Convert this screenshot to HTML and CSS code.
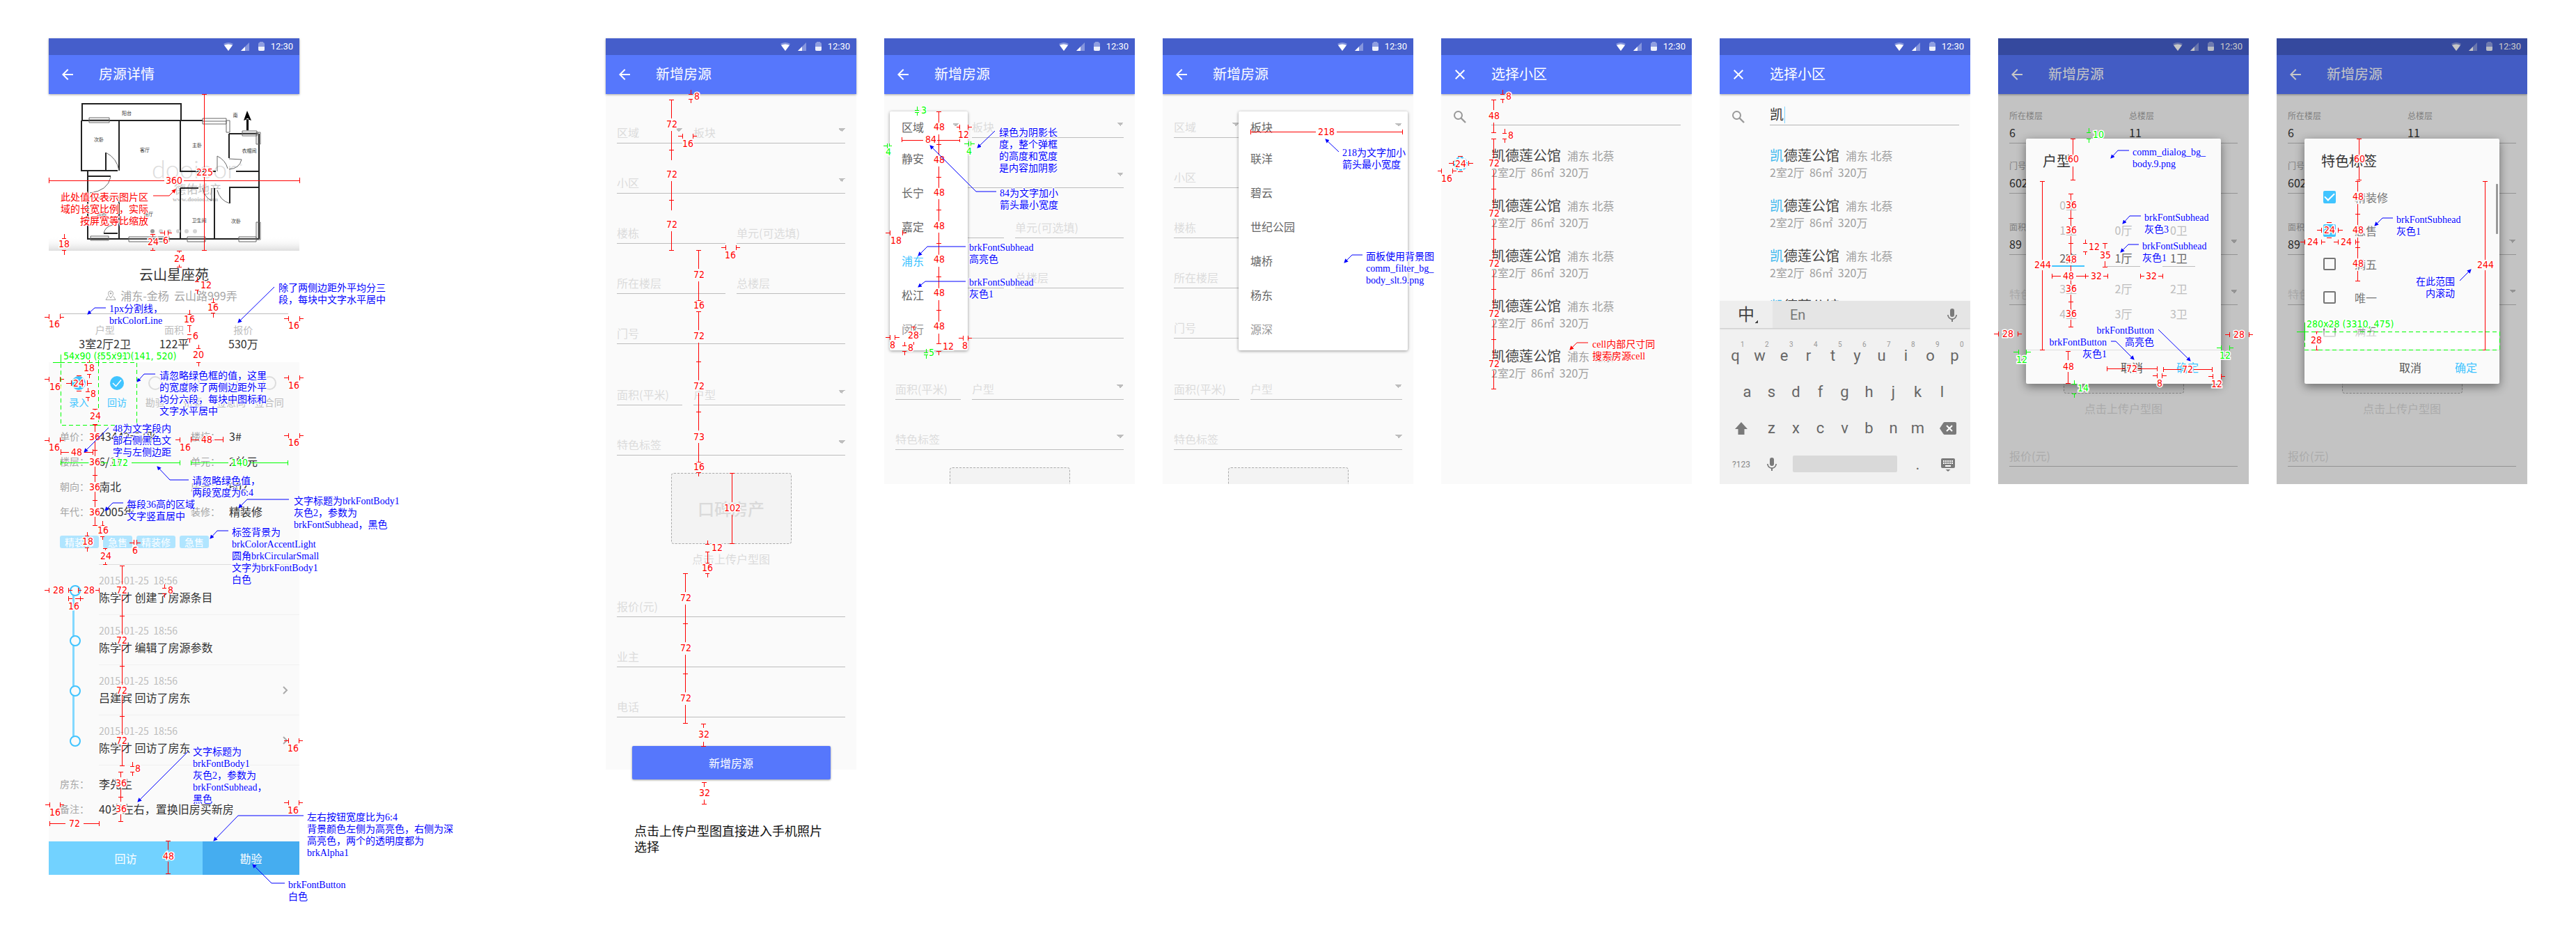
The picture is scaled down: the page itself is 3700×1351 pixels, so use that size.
FILE: index.html
```html
<!DOCTYPE html>
<html lang="zh-CN">
<head>
<meta charset="utf-8">
<meta name="viewport" content="width=device-width, initial-scale=1">
<title>房源录入 标注稿</title>
<link rel="stylesheet" href="styles.css">
</head>
<body>
<svg class="sprite" width="0" height="0" aria-hidden="true">
  <defs>
    <symbol id="i-status" viewBox="0 0 64 24">
      <path d="M0 8q7-4 14 0L7 18z" fill="#fff" opacity=".35"/><path d="M1 10q6-3 12 0L7 18z" fill="#fff"/>
      <path d="M37 6v12H25z" fill="#fff" opacity=".35"/><path d="M31 12v6h-6z" fill="#fff"/>
      <rect x="50" y="6" width="9" height="12" rx="2" fill="#fff" opacity=".4"/><path d="M50 12h9v4a2 2 0 0 1-2 2h-5a2 2 0 0 1-2-2z" fill="#fff" opacity=".85"/><rect x="52" y="5" width="5" height="1" fill="#fff" opacity=".4"/>
    </symbol>
    <symbol id="i-back" viewBox="0 0 24 24"><path d="M20 11H7.800l5.600-5.600L12 4l-8 8 8 8 1.400-1.400L7.800 13H20z" fill="currentColor"/></symbol>
    <symbol id="i-close" viewBox="0 0 24 24"><path d="M19 6.400 17.600 5 12 10.600 6.400 5 5 6.400l5.600 5.600L5 17.600 6.400 19l5.600-5.600 5.600 5.600 1.400-1.400-5.600-5.600z" fill="currentColor"/></symbol>
    <symbol id="i-search" viewBox="0 0 24 24"><circle cx="9.500" cy="9.500" r="5.500" fill="none" stroke="currentColor" stroke-width="2"/><path d="m13.500 13.500 6.500 6.500" stroke="currentColor" stroke-width="2.400"/></symbol>
    <symbol id="i-pin" viewBox="0 0 16 16"><path d="M8 12C6 9 4.500 7.500 4.500 5.300a3.500 3.500 0 0 1 7 0C11.500 7.500 10 9 8 12z" fill="none" stroke="currentColor"/><circle cx="8" cy="5.300" r="1.200" fill="currentColor"/><path d="M4 9.500 1 14.500h14l-3-5" fill="none" stroke="currentColor"/></symbol>
    <symbol id="i-done" viewBox="0 0 24 24"><circle cx="12" cy="12" r="10" fill="#40c4ff"/><path d="m6 12 4.500 4.500 7.500-9" fill="none" stroke="#fff" stroke-width="1.500"/></symbol>
    <symbol id="i-todo" viewBox="0 0 24 24"><circle cx="12" cy="12" r="9" fill="none" stroke="#dcdcdc" stroke-width="2"/></symbol>
    <symbol id="i-next" viewBox="0 0 8 12"><path d="m1 1 5 5-5 5" fill="none" stroke="#aaa" stroke-width="2"/></symbol>
    <symbol id="i-mic" viewBox="0 0 24 24"><path d="M12 14a3 3 0 0 0 3-3V5a3 3 0 0 0-6 0v6a3 3 0 0 0 3 3zm5.300-3a5.300 5.300 0 0 1-10.600 0H5a7 7 0 0 0 6 6.900V21h2v-3.100A7 7 0 0 0 19 11z" fill="#7a7a7a"/></symbol>
    <symbol id="i-shift" viewBox="0 0 18 18"><path d="M9 0 0 10h4.500v8h9v-8H18z" fill="#7a7a7a"/></symbol>
    <symbol id="i-erase" viewBox="0 0 24 18"><path d="M22 0H7Q6 0 5.300 1L0 9l5.300 8Q6 18 7 18h15q2 0 2-2V2q0-2-2-2z" fill="#7a7a7a"/><path d="m10 5 8 8m0-8-8 8" stroke="#fff" stroke-width="2"/></symbol>
    <symbol id="i-keys" viewBox="0 0 20 19"><rect width="20" height="14" rx="2" fill="#7a7a7a"/><path d="M3 4h14M3 7h14" stroke="#fff" stroke-width="2" stroke-dasharray="2 1"/><path d="M6 11h8" stroke="#fff" stroke-width="2"/><path d="M6.500 16h7L10 19z" fill="#7a7a7a"/></symbol>
    <marker id="tip-blue" viewBox="0 0 6 6" refX="5" refY="3" markerWidth="6" markerHeight="6" orient="auto" markerUnits="userSpaceOnUse"><path d="M0 0 6 3 0 6z" fill="#00f"/></marker>
    <marker id="tip-red" viewBox="0 0 6 6" refX="5" refY="3" markerWidth="6" markerHeight="6" orient="auto" markerUnits="userSpaceOnUse"><path d="M0 0 6 3 0 6z" fill="#f00"/></marker>
  </defs>
</svg>

<main class="board">

<!-- 房源详情 -->
<article class="phone phone--detail">
  <div class="screen">
    <header class="bar">
      <div class="status"><svg class="status__icons"><use href="#i-status"/></svg><span>12:30</span></div>
      <div class="toolbar"><button class="icon-button" aria-label="返回"><svg><use href="#i-back"/></svg></button><h1>房源详情</h1></div>
    </header>
    <svg class="plan" viewBox="0 80 360 225" role="img" aria-label="户型图">
      <defs><linearGradient id="fade" x2="0" y2="1"><stop offset="0" stop-color="#fff" stop-opacity="0"/><stop offset="1" stop-color="#dedede"/></linearGradient></defs>
      <rect y="80" width="360" height="225" fill="#fff"/>
      <rect y="284" width="360" height="21" fill="url(#fade)"/>
      <g class="plan__mark"><text x="148" y="201" class="plan__logo">dooioor</text><text x="274" y="186" class="plan__reg">®</text><text x="180" y="223" class="plan__brand">德佑地产</text><text x="178" y="234" class="plan__site">www.dooioo.com</text></g>
      <g class="plan__wall">
        <path d="M48 118V94h142v24M48 118h173M47 118v72h52M101 118v72M189 118v73h51M259 137v35M259 137h41M302 137v151M269 191h33M56 190v97M189 215v73M189 215h26M238 215v73M259 214h43M260 214v23M101 232v55M55 288h247M56 198h33M82 164v26M79 280h20"/>
      </g>
      <g class="plan__line">
        <path d="M82 164q16 8 19 26M242 191v-22q12 6 15 18M259 173l18 1q-3 13-18 14M89 199q-4 20-30 23M260 237q-14-4-18-19M234 215v18q-10-4-13-18M79 280q2-10 13-12M56 229h45"/>
        <path d="M58 114h29v7H58zM58 117h29M221 115h34v8h-34zM221 119h34M255 118h5v17h-5zM278 133h21v7h-21zM278 136h21M298 135h6v17h-6zM301 135v17M60 284h26v6H60zM60 287h26M115 285h58v7h-58zM115 288h58M199 285h26v7h-26zM199 288h26M273 285h25v7h-25zM273 288h25M298 264h6v25h-6zM301 264v25"/>
      </g>
      <path d="m285 104-5 14 5-2 6 2zM284 115h3v17h-3z"/>
      <g class="plan__room"><text x="112" y="110">阳台</text><text x="72" y="148">次卧</text><text x="138" y="163">客厅</text><text x="213" y="156">主卧</text><text x="288" y="164">衣帽间</text><text x="268" y="113">南</text><text x="76" y="257">厨房</text><text x="143" y="255">餐厅</text><text x="216" y="264">卫生间</text><text x="269" y="265">次卧</text></g>
      <g fill="#d5d5d5"><circle cx="149" cy="277" r="3" fill="#999"/><circle cx="161" cy="277" r="3"/><circle cx="173" cy="277" r="3"/><circle cx="186" cy="277" r="3"/><circle cx="198" cy="277" r="3"/><circle cx="210" cy="277" r="3"/></g>
    </svg>
    <section class="summary">
      <h2>云山星座苑</h2>
      <p class="address"><svg><use href="#i-pin"/></svg>浦东-金杨&nbsp; 云山路999弄</p>
      <dl class="facts">
        <div><dt>户型</dt><dd>3室2厅2卫</dd></div>
        <div><dt>面积</dt><dd>122平</dd></div>
        <div><dt>报价</dt><dd>530万</dd></div>
      </dl>
    </section>
    <ol class="steps">
      <li class="is-done"><svg><use href="#i-done"/></svg>录入</li>
      <li class="is-done"><svg><use href="#i-done"/></svg>回访</li>
      <li><svg><use href="#i-todo"/></svg>勘验</li>
      <li><svg><use href="#i-todo"/></svg>带看</li>
      <li><svg><use href="#i-todo"/></svg>签意向</li>
      <li><svg><use href="#i-todo"/></svg>签合同</li>
    </ol>
    <dl class="specs">
      <dt>单价：</dt><dd>43442元/平</dd><dt>楼栋：</dt><dd>3#</dd>
      <dt>楼层：</dt><dd>6/11</dd><dt>单元：</dt><dd>2单元</dd>
      <dt>朝向：</dt><dd>南北</dd><dt>房号：</dt><dd>602</dd>
      <dt>年代：</dt><dd>2005年</dd><dt>装修：</dt><dd>精装修</dd>
    </dl>
    <ul class="tags"><li>精装修</li><li>急售</li><li>精装修</li><li>急售</li></ul>
    <ol class="timeline">
      <li><div class="entry"><p><time>2015-01-25&nbsp; 18:56</time>陈学才 创建了房源条目</p></div></li>
      <li><div class="entry"><p><time>2015-01-25&nbsp; 18:56</time>陈学才 编辑了房源参数</p></div></li>
      <li><div class="entry"><p><time>2015-01-25&nbsp; 18:56</time>吕建宾 回访了房东</p><svg><use href="#i-next"/></svg></div></li>
      <li><div class="entry"><p><time>2015-01-25&nbsp; 18:56</time>陈学才 回访了房东</p><svg><use href="#i-next"/></svg></div></li>
    </ol>
    <dl class="specs specs--single">
      <dt>房东：</dt><dd>李先生</dd>
      <dt>备注：</dt><dd>40岁左右，置换旧房买新房</dd>
    </dl>
    <div class="actions"><button class="actions__visit">回访</button><button class="actions__survey">勘验</button></div>
  </div>
  <svg class="redlines">
    <path class="dim" d="M220 80h7M223 80V187M223 199V304M220 304h7M0 200v8M0 204H166M194 204H360M360 200v8
      M19 287h6M22 281v6M19 304h6M22 304v7M146 281h7M149 281v4M146 304h7M149 301v3M166 276v7M160 279h6M171 276v7M171 279h6
      M184 305h7M187 305v3M184 328h7M187 325v3M210 349h6M213 343v6M210 361h6M213 361v6M233 379h6M236 373v6M233 394h6M236 394v7
      M0 396v7M-6 400h6M16 396v7M16 400h6M199 396h6M202 390v6M199 412h6M202 412v10M199 425h6M199 431h6M202 431v6
      M344 399v7M338 402h6M360 399v7M360 402h6M212 445h6M215 440v5M212 465h6M215 465v6M55 465h6M58 461v4M55 482h6M58 482v6
      M0 486v7M-6 489h6M16 486v7M16 489h6M25 495h7M32 491v8M55 491v8M55 495h7M40 484h7M40 506h7M53 507h6M56 502v5M53 515h6M56 515v6
      M63 532h7M66 532v2M63 554h7M344 484v7M338 487h6M360 484v7M360 487h6
      M63 555h7M66 555V565M66 579V600M63 591h7M66 615V637M63 627h7M66 651V673M63 663h7M66 687V699M63 699h7
      M0 573v7M-6 577h6M16 573v7M16 577h6M17 590v8M17 594H29M51 594H63M63 590v8M188 573v7M182 576h6M204 572v8M204 576h12M238 576h12M250 572v8
      M344 567v7M338 570h6M360 567v7M360 570h6M74 699h6M77 693v6M74 715h6M77 715v5M52 714h6M55 709v5M52 731h6M55 731v6
      M122 720v7M116 724h6M126 720v7M126 724h6M78 732h6M81 732v3M78 755h6M81 752v3
      M102 757h7M105 757V784M105 799V856M102 829h7M105 871V928M102 901h7M105 943V1000M102 973h7M105 1015V1044M102 1044h7
      M0 789v7M-6 792h6M28 789v7M28 792h6M42 789v7M42 792h5M67 792h6M72 789v7M28 801v7M28 804h6M45 801v7M38 804h12M163 789h6M166 784v5M163 797h6M166 797v6
      M117 1045h6M120 1039v6M117 1053h6M120 1053v6M100 1053h7M103 1053v8M103 1077v19M100 1089h7M103 1114v10M100 1124h7
      M1 1097v7M-5 1100h6M16 1097v7M16 1100h6M1 1124v7M1 1127h23M50 1127h22M72 1124v7M344 1005v7M338 1008h6M359 1005v7M359 1008h6M344 1094v7M338 1097h6M359 1094v7M359 1097h6
      M168 1152h7M171 1152v13M171 1182v17M168 1199h7"/>
    <path class="dim dim--green" d="M17 454v11M6 465h11M71 454v11M17 606v7M17 609h68M119 609h69M188 606v7M204 606v7M204 609h54M290 609h53M343 606v7"/>
    <path class="dim dim--green dim--dashed" d="M17 465h109v90H17zM71 465v90"/>
    <g class="num">
      <text x="224" y="197">225</text><text x="180" y="209">360</text><text x="22" y="300">18</text><text x="150" y="297">24</text><text x="168" y="295">6</text><text x="188" y="321">24</text><text x="226" y="359">12</text><text x="236" y="391">16</text><text x="8" y="415">16</text><text x="202" y="408">16</text><text x="211" y="432">6</text><text x="215" y="459">20</text><text x="352" y="417">16</text><text x="58" y="478">18</text><text x="9" y="505">16</text><text x="43" y="500">24</text><text x="64" y="515">8</text><text x="67" y="547">24</text><text x="352" y="503">16</text>
      <text x="66" y="577">36</text><text x="66" y="613">36</text><text x="66" y="649">36</text><text x="66" y="685">36</text><text x="8" y="592">16</text><text x="40" y="599">48</text><text x="196" y="592">16</text><text x="227" y="581">48</text><text x="352" y="585">16</text><text x="78" y="711">16</text><text x="56" y="727">18</text><text x="124" y="740">6</text><text x="82" y="748">24</text>
      <text x="105" y="797">72</text><text x="105" y="869">72</text><text x="105" y="941">72</text><text x="105" y="1013">72</text><text x="14" y="797">28</text><text x="58" y="797">28</text><text x="36" y="820">16</text><text x="175" y="797">8</text><text x="128" y="1053">8</text><text x="104" y="1074">36</text><text x="104" y="1111">36</text><text x="9" y="1116">16</text><text x="37" y="1132">72</text><text x="351" y="1024">16</text><text x="351" y="1113">16</text><text x="172" y="1179">48</text>
    </g>
    <g class="num num--green"><text x="102" y="614">172</text><text x="274" y="614">140</text><text class="start" x="21" y="461">54x90 (87, 520)</text><text class="start" x="74" y="461">55x91 (141, 520)</text></g>
    <path class="lead lead--red" d="M150 226h23l9-9"/>
    <text class="note note--red end" y="233"><tspan x="143">此处值仅表示图片区</tspan><tspan x="143" dy="17">域的长宽比例，实际</tspan><tspan x="143" dy="17">按屏宽等比缩放</tspan></text>
    <path class="lead" d="M324 357 272 408"/><path class="lead" d="M82 387H66L56 396"/><path class="lead" d="M153 482H137L127 493"/><path class="lead" d="M86 559 51 594"/><path class="lead" d="M201 634H174L156 615"/><path class="lead" d="M107 667H92L81 678"/><path class="lead" d="M345 662H285L273 674"/><path class="lead" d="M258 707H242L232 718"/><path class="lead" d="M201 1023 128 1096"/><path class="lead" d="M366 1116H272L237 1152"/><path class="lead" d="M339 1213H320L293 1186"/>
    <g class="note">
      <text y="363"><tspan x="330">除了两侧边距外平均分三</tspan><tspan x="330" dy="17">段，每块中文字水平居中</tspan></text>
      <text y="393"><tspan x="87">1px分割线，</tspan><tspan x="87" dy="17">brkColorLine</tspan></text>
      <text y="489"><tspan x="159">请忽略绿色框的值，这里</tspan><tspan x="159" dy="17">的宽度除了两侧边距外平</tspan><tspan x="159" dy="17">均分六段，每块中图标和</tspan><tspan x="159" dy="17">文字水平居中</tspan></text>
      <text y="565"><tspan x="92">48为文字段内</tspan><tspan x="92" dy="17">部右侧黑色文</tspan><tspan x="92" dy="17">字与左侧边距</tspan></text>
      <text y="640"><tspan x="206">请忽略绿色值，</tspan><tspan x="206" dy="17">两段宽度为6:4</tspan></text>
      <text y="674"><tspan x="112">每段36高的区域</tspan><tspan x="112" dy="17">文字竖直居中</tspan></text>
      <text y="669"><tspan x="352">文字标题为brkFontBody1</tspan><tspan x="352" dy="17">灰色2，参数为</tspan><tspan x="352" dy="17">brkFontSubhead，黑色</tspan></text>
      <text y="714"><tspan x="263">标签背景为</tspan><tspan x="263" dy="17">brkColorAccentLight</tspan><tspan x="263" dy="17">圆角brkCircularSmall</tspan><tspan x="263" dy="17">文字为brkFontBody1</tspan><tspan x="263" dy="17">白色</tspan></text>
      <text y="1029"><tspan x="207">文字标题为</tspan><tspan x="207" dy="17">brkFontBody1</tspan><tspan x="207" dy="17">灰色2，参数为</tspan><tspan x="207" dy="17">brkFontSubhead，</tspan><tspan x="207" dy="17">黑色</tspan></text>
      <text y="1123"><tspan x="371">左右按钮宽度比为6:4</tspan><tspan x="371" dy="17">背景颜色左侧为高亮色，右侧为深</tspan><tspan x="371" dy="17">高亮色，两个的透明度都为</tspan><tspan x="371" dy="17">brkAlpha1</tspan></text>
      <text y="1220"><tspan x="344">brkFontButton</tspan><tspan x="344" dy="17">白色</tspan></text>
    </g>
  </svg>
</article>

<!-- 新增房源：完整表单 -->
<article class="phone">
  <div class="screen">
    <header class="bar">
      <div class="status"><svg class="status__icons"><use href="#i-status"/></svg><span>12:30</span></div>
      <div class="toolbar"><button class="icon-button" aria-label="返回"><svg><use href="#i-back"/></svg></button><h1>新增房源</h1></div>
    </header>
    <form class="form form--padded">
      <div class="row"><label class="field field--short"><select aria-label="区域"><option>区域</option></select></label><label class="field"><select aria-label="板块"><option>板块</option></select></label></div>
      <div class="row"><label class="field"><select aria-label="小区"><option>小区</option></select></label></div>
      <div class="row"><label class="field"><input placeholder="楼栋" aria-label="楼栋"></label><label class="field"><input placeholder="单元(可选填)" aria-label="单元"></label></div>
      <div class="row"><label class="field"><input placeholder="所在楼层" aria-label="所在楼层"></label><label class="field"><input placeholder="总楼层" aria-label="总楼层"></label></div>
      <div class="row row--spaced"><label class="field"><input placeholder="门号" aria-label="门号"></label></div>
      <div class="row"><label class="field field--short"><input placeholder="面积(平米)" aria-label="面积"></label><label class="field"><select aria-label="户型"><option>户型</option></select></label></div>
      <div class="row row--spaced"><label class="field"><select aria-label="特色标签"><option>特色标签</option></select></label></div>
      <button type="button" class="upload">口碑房产</button>
      <p class="upload-hint">点击上传户型图</p>
      <div class="row"><label class="field"><input placeholder="报价(元)" aria-label="报价"></label></div>
      <div class="row"><label class="field"><input placeholder="业主" aria-label="业主"></label></div>
      <div class="row"><label class="field"><input placeholder="电话" aria-label="电话"></label></div>
      <button type="button" class="submit">新增房源</button>
    </form>
  </div>
  <p class="caption">点击上传户型图直接进入手机照片选择</p>
  <svg class="redlines">
    <path class="dim" d="M119 80h6M122 74v6M119 87h6M122 87v6
      M91 88h7M94 88v27M94 133v42M91 160h7M94 205v42M91 232h7M94 277v27M91 304h7
      M110 137v7M104 140h6M125 137v7M125 140h6M172 297v7M166 300h6M187 297v7M187 300h6
      M130 304h7M133 304v27M133 349v27M130 376h7M130 392h7M133 392v27M133 437v54M130 464h7M133 509v54M130 536h7M133 581v27M130 608h7M130 623h7M133 623v6
      M178 624h7M181 624v42M181 684v41M178 725h7M143 726h6M146 721v5M143 737h6M146 737v16M143 753h6M143 768h6M146 768v6
      M111 768h7M114 768v27M114 813v54M111 840h7M114 885v54M111 912h7M114 957v26M111 983h7
      M137 984h7M140 984v6M140 1010v6M137 1016h7M138 1068h7M141 1068v7M141 1093v6M138 1099h7"/>
    <g class="num"><text x="131" y="88">8</text><text x="95" y="128">72</text><text x="95" y="200">72</text><text x="95" y="272">72</text><text x="118" y="156">16</text><text x="179" y="316">16</text><text x="134" y="344">72</text><text x="134" y="388">16</text><text x="134" y="432">72</text><text x="134" y="504">72</text><text x="134" y="577">73</text><text x="134" y="620">16</text><text x="182" y="679">102</text><text x="160" y="736">12</text><text x="146" y="765">16</text><text x="115" y="808">72</text><text x="115" y="880">72</text><text x="115" y="952">72</text><text x="141" y="1004">32</text><text x="142" y="1088">32</text></g>
  </svg>
</article>

<!-- 新增房源：区域下拉 -->
<article class="phone">
  <div class="screen screen--fold">
    <header class="bar">
      <div class="status"><svg class="status__icons"><use href="#i-status"/></svg><span>12:30</span></div>
      <div class="toolbar"><button class="icon-button" aria-label="返回"><svg><use href="#i-back"/></svg></button><h1>新增房源</h1></div>
    </header>
    <form class="form">
      <div class="row"><label class="field field--short"><select aria-label="区域"><option></option></select></label><label class="field"><select aria-label="板块"><option>板块</option></select></label></div>
      <div class="row"><label class="field"><select aria-label="小区"><option></option></select></label></div>
      <div class="row"><label class="field"><input aria-label="楼栋"></label><label class="field"><input placeholder="单元(可选填)" aria-label="单元"></label></div>
      <div class="row"><label class="field"><input aria-label="所在楼层"></label><label class="field"><input placeholder="总楼层" aria-label="总楼层"></label></div>
      <div class="row row--spaced"><label class="field"><input aria-label="门号"></label></div>
      <div class="row"><label class="field field--short"><input placeholder="面积(平米)" aria-label="面积"></label><label class="field"><select aria-label="户型"><option>户型</option></select></label></div>
      <div class="row row--spaced"><label class="field"><select aria-label="特色标签"><option>特色标签</option></select></label></div>
      <button type="button" class="upload" aria-label="上传户型图"></button>
    </form>
    <div class="menu menu--district"><button class="menu__head">区域</button><ul><li>静安</li><li>长宁</li><li>嘉定</li><li class="is-active">浦东</li><li>松江</li><li>闵行</li></ul></div>
  </div>
  <svg class="redlines">
    <path class="dim" d="M75 105h7M78 105v17M78 138v30M75 152h7M78 184v31M75 199h7M78 231v32M75 246h7M78 279v32M75 294h7M78 328v31M75 342h7M78 376v31M75 390h7M78 424v14M75 438h7
      M25 142v7M25 146h31M76 146h32M108 142v7M108 124v7M104 127h4M120 124v7M120 127h6M8 276v7M2 279h6M26 276v7M26 279h6M8 426v7M2 429h6M15 426v7M15 429h7M113 427v7M107 430h6M120 427v7M120 430h6
      M39 414h6M42 414v4M42 436v4M26 441h6M29 436v5M26 449h6M29 449v6M75 449h7M78 449v6"/>
    <path class="dim dim--green" d="M44 103h6M47 98v5M44 106h6M47 106v5M4 151v7M-1 154h5M7 151v7M7 154h4M121 148v7M115 151h6M124 148v7M124 151h6M57 451h6M60 446v5M57 454h6M60 454v6"/>
    <g class="num"><text x="79" y="132">48</text><text x="79" y="179">48</text><text x="79" y="226">48</text><text x="79" y="274">48</text><text x="79" y="322">48</text><text x="79" y="370">48</text><text x="79" y="418">48</text><text x="67" y="150">84</text><text x="114" y="143">12</text><text x="17" y="295">18</text><text x="12" y="445">8</text><text x="116" y="446">8</text><text x="42" y="431">28</text><text x="38" y="449">8</text><text x="92" y="447">12</text></g>
    <g class="num num--green"><text x="57" y="108">3</text><text x="6" y="168">4</text><text x="122" y="167">4</text><text x="68" y="456">5</text></g>
    <path class="lead" d="m159 133-25 24"/><path class="lead" d="M161 220h-29L66 154"/><path class="lead" d="M117 299H62L49 312"/><path class="lead" d="M117 349H59l-10 8"/>
    <g class="note">
      <text y="140"><tspan x="165">绿色为阴影长</tspan><tspan x="165" dy="17">度，整个弹框</tspan><tspan x="165" dy="17">的高度和宽度</tspan><tspan x="165" dy="17">是内容加阴影</tspan></text>
      <text y="227"><tspan x="166">84为文字加小</tspan><tspan x="166" dy="17">箭头最小宽度</tspan></text>
      <text y="305"><tspan x="122">brkFontSubhead</tspan><tspan x="122" dy="17">高亮色</tspan></text>
      <text y="355"><tspan x="122">brkFontSubhead</tspan><tspan x="122" dy="17">灰色1</tspan></text>
    </g>
  </svg>
</article>

<!-- 新增房源：板块下拉 -->
<article class="phone">
  <div class="screen screen--fold">
    <header class="bar">
      <div class="status"><svg class="status__icons"><use href="#i-status"/></svg><span>12:30</span></div>
      <div class="toolbar"><button class="icon-button" aria-label="返回"><svg><use href="#i-back"/></svg></button><h1>新增房源</h1></div>
    </header>
    <form class="form">
      <div class="row"><label class="field field--short"><select aria-label="区域"><option>区域</option></select></label><label class="field"><select aria-label="板块"><option></option></select></label></div>
      <div class="row"><label class="field"><select aria-label="小区"><option>小区</option></select></label></div>
      <div class="row"><label class="field"><input placeholder="楼栋" aria-label="楼栋"></label><label class="field"><input aria-label="单元"></label></div>
      <div class="row"><label class="field"><input placeholder="所在楼层" aria-label="所在楼层"></label><label class="field"><input aria-label="总楼层"></label></div>
      <div class="row row--spaced"><label class="field"><input placeholder="门号" aria-label="门号"></label></div>
      <div class="row"><label class="field field--short"><input placeholder="面积(平米)" aria-label="面积"></label><label class="field"><select aria-label="户型"><option>户型</option></select></label></div>
      <div class="row row--spaced"><label class="field"><select aria-label="特色标签"><option>特色标签</option></select></label></div>
      <button type="button" class="upload" aria-label="上传户型图"></button>
    </form>
    <div class="menu menu--block"><button class="menu__head">板块</button><ul><li>联洋</li><li>碧云</li><li>世纪公园</li><li>塘桥</li><li>杨东</li><li>源深</li></ul></div>
  </div>
  <svg class="redlines">
    <path class="dim" d="M126 131v7M126 134h94M250 134h94M344 131v7"/>
    <g class="num"><text x="235" y="139">218</text></g>
    <path class="lead" d="m253 163-19-18"/><path class="lead" d="M287 311h-15l-11 11"/>
    <g class="note">
      <text y="169"><tspan x="258">218为文字加小</tspan><tspan x="258" dy="17">箭头最小宽度</tspan></text>
      <text y="318"><tspan x="292">面板使用背景图</tspan><tspan x="292" dy="17">comm_filter_bg_</tspan><tspan x="292" dy="17">body_slt.9.png</tspan></text>
    </g>
  </svg>
</article>

<!-- 选择小区 -->
<article class="phone">
  <div class="screen screen--fold">
    <header class="bar">
      <div class="status"><svg class="status__icons"><use href="#i-status"/></svg><span>12:30</span></div>
      <div class="toolbar"><button class="icon-button" aria-label="关闭"><svg><use href="#i-close"/></svg></button><h1>选择小区</h1></div>
    </header>
    <label class="search"><svg><use href="#i-search"/></svg><input aria-label="搜索小区"></label>
    <ul class="results">
      <li><h2>凯德莲公馆<small>浦东 北蔡</small></h2><p>2室2厅&nbsp; 86㎡&nbsp; 320万</p></li>
      <li><h2>凯德莲公馆<small>浦东 北蔡</small></h2><p>2室2厅&nbsp; 86㎡&nbsp; 320万</p></li>
      <li><h2>凯德莲公馆<small>浦东 北蔡</small></h2><p>2室2厅&nbsp; 86㎡&nbsp; 320万</p></li>
      <li><h2>凯德莲公馆<small>浦东 北蔡</small></h2><p>2室2厅&nbsp; 86㎡&nbsp; 320万</p></li>
      <li><h2>凯德莲公馆<small>浦东 北蔡</small></h2><p>2室2厅&nbsp; 86㎡&nbsp; 320万</p></li>
    </ul>
  </div>
  <svg class="redlines">
    <circle cx="28" cy="180" r="9" fill="none" stroke="#40c4ff" stroke-width="2" stroke-dasharray="4 2"/>
    <path class="dim" d="M85 80h6M88 74v6M85 87h6M88 87v6M72 88h7M75 88v15M75 121v14M72 135h7M88 136h6M91 130v6M88 144h6M91 144v6
      M72 144h7M75 144v28M75 189v55M72 216h7M75 261v55M72 288h7M75 333v55M72 360h7M75 405v55M72 432h7M75 477v26M72 503h7
      M11 179h6M17 176v7M39 176v7M39 179h7M24 169h7M24 191h7M0 187v7M-5 190h5M16 187v7M16 190h6"/>
    <g class="num"><text x="97" y="88">8</text><text x="76" y="116">48</text><text x="100" y="144">8</text><text x="76" y="184">72</text><text x="76" y="256">72</text><text x="76" y="328">72</text><text x="76" y="400">72</text><text x="76" y="472">72</text><text x="28" y="185">24</text><text x="8" y="206">16</text></g>
    <path class="lead lead--red" d="M211 437h-16l-10 10"/>
    <text class="note note--red" y="444"><tspan x="217">cell内部尺寸同</tspan><tspan x="217" dy="17">搜索房源cell</tspan></text>
  </svg>
</article>

<!-- 选择小区：输入中 -->
<article class="phone">
  <div class="screen screen--fold">
    <header class="bar">
      <div class="status"><svg class="status__icons"><use href="#i-status"/></svg><span>12:30</span></div>
      <div class="toolbar"><button class="icon-button" aria-label="关闭"><svg><use href="#i-close"/></svg></button><h1>选择小区</h1></div>
    </header>
    <label class="search search--typing"><svg><use href="#i-search"/></svg><input value="凯" aria-label="搜索小区"></label>
    <ul class="results">
      <li><h2><mark>凯</mark>德莲公馆<small>浦东 北蔡</small></h2><p>2室2厅&nbsp; 86㎡&nbsp; 320万</p></li>
      <li><h2><mark>凯</mark>德莲公馆<small>浦东 北蔡</small></h2><p>2室2厅&nbsp; 86㎡&nbsp; 320万</p></li>
      <li><h2><mark>凯</mark>德莲公馆<small>浦东 北蔡</small></h2><p>2室2厅&nbsp; 86㎡&nbsp; 320万</p></li>
      <li><h2><mark>凯</mark>德莲公馆</h2></li>
    </ul>
    <div class="keyboard">
      <div class="keyboard__top"><button class="keyboard__lang">中</button><button class="keyboard__en">En</button><button class="keyboard__mic" aria-label="语音"><svg width="24" height="24"><use href="#i-mic"/></svg></button></div>
      <div class="keys">
        <div class="keys__row"><button>q<sup>1</sup></button><button>w<sup>2</sup></button><button>e<sup>3</sup></button><button>r<sup>4</sup></button><button>t<sup>5</sup></button><button>y<sup>6</sup></button><button>u<sup>7</sup></button><button>i<sup>8</sup></button><button>o<sup>9</sup></button><button>p<sup>0</sup></button></div>
        <div class="keys__row keys__row--inset"><button>a</button><button>s</button><button>d</button><button>f</button><button>g</button><button>h</button><button>j</button><button>k</button><button>l</button></div>
        <div class="keys__row"><button class="key--wide" aria-label="大写"><svg width="18" height="18"><use href="#i-shift"/></svg></button><button>z</button><button>x</button><button>c</button><button>v</button><button>b</button><button>n</button><button>m</button><button class="key--wide" aria-label="删除"><svg width="24" height="18"><use href="#i-erase"/></svg></button></div>
        <div class="keys__row"><button class="key--wide key--small">?123</button><button aria-label="语音输入"><svg width="24" height="24"><use href="#i-mic"/></svg></button><button class="key--space" aria-label="空格"></button><button>.</button><button class="key--wide" aria-label="收起键盘"><svg width="20" height="19"><use href="#i-keys"/></svg></button></div>
      </div>
    </div>
  </div>
</article>

<!-- 新增房源：户型弹窗 -->
<article class="phone">
  <div class="screen screen--fold">
    <header class="bar">
      <div class="status"><svg class="status__icons"><use href="#i-status"/></svg><span>12:30</span></div>
      <div class="toolbar"><button class="icon-button" aria-label="返回"><svg><use href="#i-back"/></svg></button><h1>新增房源</h1></div>
    </header>
    <form class="form form--padded">
      <div class="row"><label class="field">所在楼层<input value="6"></label><label class="field">总楼层<input value="11"></label></div>
      <div class="row row--spaced"><label class="field">门号<input value="602"></label></div>
      <div class="row"><label class="field field--short">面积<input value="89"></label><label class="field"><select aria-label="户型"><option></option></select></label></div>
      <div class="row row--spaced"><label class="field"><select aria-label="特色标签"><option>特色标签</option></select></label></div>
      <button type="button" class="upload" aria-label="上传户型图"></button>
      <p class="upload-hint">点击上传户型图</p>
      <div class="row"><label class="field"><input placeholder="报价(元)" aria-label="报价"></label></div>
    </form>
    <div class="scrim">
      <section class="dialog" role="dialog" aria-label="户型">
        <h2>户型</h2>
        <div class="dialog__body wheels">
          <ul class="is-focused"><li>0室</li><li>1室</li><li class="is-picked">2室</li><li>3室</li><li>4室</li></ul>
          <ul><li></li><li>0厅</li><li class="is-picked">1厅</li><li>2厅</li><li>3厅</li></ul>
          <ul><li></li><li>0卫</li><li class="is-picked">1卫</li><li>2卫</li><li>3卫</li></ul>
        </div>
        <footer><button>取消</button><button class="is-primary">确定</button></footer>
      </section>
    </div>
  </div>
  <svg class="redlines">
    <path class="dim" d="M104 144h7M107 144v27M107 184v19M104 203h7M60 205h7M63 205v113M63 333v114M60 447h7
      M101 223h7M104 223v9M104 247v22M101 258h7M104 284v27M101 294h7M104 326v14M104 345v8M104 368v21M101 378h7M104 404v10M101 414h7
      M122 294h6M125 289v5M122 306h6M125 306v5M150 294h7M153 294v8M153 320v8M150 328h7
      M77 338v7M77 341h13M112 341h18M125 338v7M151 341h6M157 338v7M204 338v7M204 341h6M230 341h6M236 338v7
      M0 421v7M-6 424h6M28 421v7M28 424h6M332 422v7M326 425h6M360 422v7M360 425h6
      M97 449h7M100 449v13M100 479v16M97 495h7M156 471v7M156 474h27M201 474h27M228 471v7M237 472v7M237 475h26M281 475h26M307 472v7
      M228 481v7M222 484h6M235 481v7M235 484h7M308 482v7M302 485h6M320 482v7M320 485h6"/>
    <path class="dim dim--green" d="M127 135h6M130 129v6M127 144h6M130 144v6M29 447v7M22 450h7M40 447v7M40 450h7M320 441v7M320 444h-6M332 441v7M332 444h6M106 496h6M109 491v5M106 510h6M109 510v6"/>
    <g class="num"><text x="108" y="178">60</text><text x="64" y="330">244</text><text x="105" y="244">36</text><text x="105" y="280">36</text><text x="105" y="322">48</text><text x="105" y="364">36</text><text x="105" y="400">36</text><text x="138" y="304">12</text><text x="154" y="316">35</text><text x="101" y="346">48</text><text x="141" y="346">32</text><text x="220" y="346">32</text><text x="14" y="429">28</text><text x="346" y="430">28</text><text x="101" y="476">48</text><text x="192" y="479">72</text><text x="272" y="480">72</text><text x="232" y="500">8</text><text x="314" y="501">12</text></g>
    <g class="num num--green"><text x="144" y="143">10</text><text x="34" y="466">12</text><text x="326" y="460">12</text><text x="122" y="507">14</text></g>
    <path class="lead" d="M188 161h-16l-10 11"/><path class="lead" d="M205 255h-16l-10 11"/><path class="lead" d="M202 296h-15l-11 11"/><path class="lead" d="m230 418 46 45"/><path class="lead" d="M162 435h7l26 26"/>
    <g class="note">
      <text y="168"><tspan x="193">comm_dialog_bg_</tspan><tspan x="193" dy="17">body.9.png</tspan></text>
      <text y="262"><tspan x="210">brkFontSubhead</tspan><tspan x="210" dy="17">灰色3</tspan></text>
      <text y="303"><tspan x="207">brkFontSubhead</tspan><tspan x="207" dy="17">灰色1</tspan></text>
      <text class="end" y="424"><tspan x="224">brkFontButton</tspan><tspan x="224" dy="17">高亮色</tspan></text>
      <text class="end" y="441"><tspan x="156">brkFontButton</tspan><tspan x="156" dy="17">灰色1</tspan></text>
    </g>
  </svg>
</article>

<!-- 新增房源：特色标签弹窗 -->
<article class="phone">
  <div class="screen screen--fold">
    <header class="bar">
      <div class="status"><svg class="status__icons"><use href="#i-status"/></svg><span>12:30</span></div>
      <div class="toolbar"><button class="icon-button" aria-label="返回"><svg><use href="#i-back"/></svg></button><h1>新增房源</h1></div>
    </header>
    <form class="form form--padded">
      <div class="row"><label class="field">所在楼层<input value="6"></label><label class="field">总楼层<input value="11"></label></div>
      <div class="row row--spaced"><label class="field">门号<input value="602"></label></div>
      <div class="row"><label class="field field--short">面积<input value="89"></label><label class="field"><select aria-label="户型"><option></option></select></label></div>
      <div class="row row--spaced"><label class="field"><select aria-label="特色标签"><option>特色标签</option></select></label></div>
      <button type="button" class="upload" aria-label="上传户型图"></button>
      <p class="upload-hint">点击上传户型图</p>
      <div class="row"><label class="field"><input placeholder="报价(元)" aria-label="报价"></label></div>
    </form>
    <div class="scrim">
      <section class="dialog" role="dialog" aria-label="特色标签">
        <h2>特色标签</h2>
        <div class="dialog__body options">
          <label><input type="checkbox" checked>精装修</label>
          <label><input type="checkbox" checked>急售</label>
          <label><input type="checkbox">满五</label>
          <label><input type="checkbox">唯一</label>
          <label><input type="checkbox">满五</label>
        </div>
        <footer><button>取消</button><button class="is-primary">确定</button></footer>
      </section>
    </div>
  </div>
  <svg class="redlines">
    <path class="dim" d="M115 144h7M118 144v27M118 184v19M115 203h7M113 205h7M116 205v15M116 238v30M113 252h7M116 286v30M113 300h7M116 334v14M113 348h7
      M58 275h6M64 272v7M88 272v7M88 275h7M72 264h7M72 286h7M40 289v7M34 292h6M64 289v7M64 292h6M88 289v7M82 292h6M113 289v7M113 292h6
      M296 205h7M299 205v113M299 333v114M296 447h7M54 421h6M57 421v4M57 441v6M54 447h6"/>
    <path class="dim dim--green" d="M29 421h11M40 408v26"/>
    <path class="dim dim--green dim--dashed" d="M40 421h280v26H40z"/>
    <g class="num"><text x="119" y="178">60</text><text x="117" y="232">48</text><text x="117" y="280">48</text><text x="117" y="328">48</text><text x="76" y="280">24</text><text x="52" y="297">24</text><text x="100" y="297">24</text><text x="300" y="330">244</text><text x="57" y="438">28</text></g>
    <g class="num num--green"><text class="start" x="43" y="415">280x28 (3310, 475)</text></g>
    <path class="lead" d="M167 258h-15l-11 11"/><path class="lead" d="m263 348 16-16"/>
    <g class="note">
      <text y="265"><tspan x="172">brkFontSubhead</tspan><tspan x="172" dy="17">灰色1</tspan></text>
      <text class="end" y="354"><tspan x="256">在此范围</tspan><tspan x="256" dy="17">内滚动</tspan></text>
    </g>
  </svg>
</article>

</main>
</body>
</html>
```

FILE: styles.css
```css
* { box-sizing: border-box; }

body {
  margin: 0;
  background: #fff;
  color: #333;
  font: 16px/20px "Noto Sans CJK SC", sans-serif;
}
h1, h2, p, ul, ol, dl, dd { margin: 0; padding: 0; font-weight: 400; }
ul, ol { list-style: none; }
button, input, select {
  margin: 0;
  padding: 0;
  border: 0;
  border-radius: 0;
  background: none;
  color: inherit;
  font: inherit;
  outline: 0;
}
.sprite { position: absolute; }

/* Board of artboards */
.board {
  display: flex;
  flex-wrap: wrap;
  align-items: flex-start;
  gap: 40px;
  padding: 55px 30px 90px 70px;
}
.phone { position: relative; width: 360px; }
.phone--detail { margin-right: 400px; }
.screen { position: relative; background: #fafafa; }
.screen--fold { height: 640px; overflow: hidden; }

/* Status bar and toolbar */
.bar { position: relative; color: #fff; box-shadow: 0 1px 3px rgba(0, 0, 0, .35); }
.status {
  display: flex;
  align-items: center;
  justify-content: flex-end;
  gap: 4px;
  height: 24px;
  padding-right: 9px;
  background: #455ecb;
  font: 13px/24px Roboto, sans-serif;
}
.status__icons { flex: none; width: 64px; height: 24px; }
.toolbar {
  display: flex;
  align-items: center;
  gap: 33px;
  height: 56px;
  padding: 0 15px;
  background: #5677fc;
}
.toolbar h1 { font-size: 20px; line-height: 54px; height: 56px; }
.icon-button { width: 24px; height: 24px; }
.icon-button svg { display: block; width: 24px; height: 24px; }

/* Floor plan */
.plan { display: block; width: 100%; }
.plan__wall path { fill: none; stroke: #222; stroke-width: 2; }
.plan__line path { fill: none; stroke: #666; stroke-width: 1; }
.plan__room text { font-size: 7px; text-anchor: middle; fill: #333; }
.plan__mark { fill: #dcdcdc; }
.plan__logo { font: 300 36px Lato, sans-serif; }
.plan__reg { font-size: 8px; }
.plan__brand { font-size: 17px; fill: #c4c4c4; }
.plan__site { font: bold 9px "Liberation Serif", serif; fill: #bbb; }

/* Summary */
.summary { padding: 24px 16px 0; background: #fff; text-align: center; }
.summary h2 { font-size: 20px; line-height: 20px; }
.address {
  display: flex;
  justify-content: center;
  gap: 6px;
  margin: 12px 0 18px;
  padding-right: 8px;
  color: #a6a6a6;
  line-height: 16px;
}
.address svg { width: 16px; height: 16px; }
.facts {
  display: grid;
  grid-template-columns: repeat(3, 1fr);
  padding: 15px 15px 19px;
  border-top: 1px solid #bdbdbd;
}
.facts dt { margin-bottom: 5px; color: #bdbdbd; font-size: 14px; line-height: 14px; }
.facts dd { line-height: 16px; white-space: nowrap; }

.steps { display: grid; grid-template-columns: repeat(6, 1fr); padding: 18px 16px 24px; color: #bdbdbd; }
.steps li {
  display: flex;
  flex-direction: column;
  align-items: center;
  gap: 8px;
  font-size: 14px;
  line-height: 14px;
}
.steps svg { width: 24px; height: 24px; }
.steps .is-done { color: #40c4ff; }

.specs {
  display: grid;
  grid-template-columns: 56px 132px 55px 1fr;
  padding: 0 16px;
  line-height: 36px;
}
.specs dt { color: #a6a6a6; font-size: 14px; }
.specs--single { grid-template-columns: 56px 1fr; padding: 8px 16px 29px; }

.tags { display: flex; gap: 6px; padding: 17px 16px 23px; }
.tags li {
  padding: 0 7px;
  border-radius: 3px;
  background: #b0e5ff;
  color: #fff;
  font-size: 14px;
  line-height: 18px;
}

.timeline li { position: relative; padding-left: 72px; }
.timeline li::before {
  content: "";
  position: absolute;
  top: 0;
  bottom: 0;
  left: 34px;
  width: 3px;
  background: #82d8ff;
}
.timeline li:first-child::before { top: 36px; }
.timeline li:last-child::before { bottom: 36px; }
.timeline li::after {
  content: "";
  position: absolute;
  top: 30px;
  left: 30px;
  width: 12px;
  height: 12px;
  border: 2px solid #40c4ff;
  border-radius: 50%;
  background: #fafafa;
}
.entry {
  display: flex;
  align-items: center;
  justify-content: space-between;
  height: 72px;
  padding-right: 16px;
  border-top: 1px solid #f0f0f0;
  line-height: 28px;
}
.timeline li:first-child .entry { border-color: #ddd; }
.timeline li:last-child .entry { height: 73px; border-bottom: 1px solid #f0f0f0; }
.entry time { display: block; color: #bdbdbd; font-size: 14px; line-height: 20px; }
.entry svg { width: 8px; height: 12px; }

.actions { display: flex; height: 48px; background: #72d2ff; color: #fff; }
.actions__visit { flex: 221; }
.actions__survey { flex: 139; background: #45adf0; }

/* Form */
.form--padded { padding-top: 8px; }
.row { display: flex; gap: 16px; padding: 0 16px; }
.row--spaced { margin-bottom: 16px; }
.field {
  display: flex;
  flex: 1;
  flex-direction: column;
  justify-content: flex-end;
  min-width: 0;
  height: 72px;
  padding-bottom: 9px;
  color: #a6a6a6;
  font-size: 12px;
  line-height: 16px;
}
.field--short { flex: 0 0 94px; }
.field input, .field select {
  width: 100%;
  height: 32px;
  border-bottom: 1px solid #bdbdbd;
  color: #333;
  font-size: 16px;
}
.field input::placeholder { color: #dcdcdc; opacity: 1; }
.field select, .menu__head {
  appearance: none;
  color: #dcdcdc;
  background:
    linear-gradient(to top right, transparent 50%, #bdbdbd 50%) right 5px top 10px / 5px 5px no-repeat,
    linear-gradient(to top left, transparent 50%, #bdbdbd 50%) right 0 top 10px / 5px 5px no-repeat;
}
.upload {
  display: block;
  width: 173px;
  height: 102px;
  margin: 0 auto;
  border: 1px dashed #aaa;
  border-radius: 4px;
  background: #f3f3f3;
  color: #dadada;
  font-size: 24px;
  font-weight: 500;
}
.upload-hint { padding: 12px 0; color: #dadada; line-height: 18px; text-align: center; }
.submit {
  display: block;
  width: 285px;
  height: 48px;
  margin: 32px auto -14px;
  border-radius: 2px;
  background: #5677fc;
  box-shadow: 0 1px 3px rgba(0, 0, 0, .4);
  color: #fff;
}
.screen:has(.submit) { display: flow-root; }
.caption { width: 280px; margin: 76px 0 0 41px; color: #111; font-size: 18px; line-height: 23px; }

/* Drop-down menus */
.menu {
  position: absolute;
  top: 105px;
  padding-bottom: 6px;
  border-radius: 2px;
  background: #fff;
  box-shadow: 0 1px 4px rgba(0, 0, 0, .4);
  color: #666;
}
.menu--district { left: 8px; width: 112px; }
.menu--block { left: 109px; width: 243px; }
.menu__head {
  width: 100%;
  height: 43px;
  padding-left: 17px;
  background-position: right 17px top 17px, right 12px top 17px;
  color: #666;
  text-align: left;
}
.menu--block .menu__head { background-position: right 13px top 17px, right 8px top 17px; }
.menu li { padding-left: 17px; line-height: 49px; }
.menu li:last-child { color: #999; }
.menu .is-active { color: #40c4ff; }

/* Search */
.search { display: flex; align-items: center; gap: 33px; height: 45px; padding: 0 16px 0 15px; }
.search svg { width: 24px; height: 24px; margin-top: 20px; color: #999; }
.search input { flex: 1; min-width: 0; height: 45px; padding-top: 13px; border-bottom: 1px solid #b5b5b5; font-size: 20px; }
.search--typing { position: relative; }
.search--typing::after { content: ""; position: absolute; top: 18px; left: 93px; width: 1px; height: 24px; background: #7fd6ff; }
.results { padding: 19px 16px 0 72px; color: #a0a0a0; }
.results li { height: 72px; padding-top: 12px; }
.results h2 { display: flex; align-items: center; height: 24px; color: #444; font-size: 20px; line-height: 24px; }
.results small { margin-left: 9px; color: #a0a0a0; font-size: 16px; }
.results p { line-height: 24px; }
.results mark { background: none; color: #40b8ee; }

/* Keyboard */
.keyboard {
  position: absolute;
  right: 0;
  bottom: 0;
  left: 0;
  background: #f1f1f1;
  color: #666;
  font-family: Roboto, "Noto Sans CJK SC", sans-serif;
}
.keyboard__top { display: flex; height: 39px; background: #e5e5e5; box-shadow: 0 1px 2px rgba(0, 0, 0, .2); }
.keyboard__lang {
  width: 76px;
  background: linear-gradient(to bottom right, transparent 50%, #444 50%) 50px 27px / 5px 5px no-repeat #eee;
  color: #444;
  font-size: 24px;
}
.keyboard__en { padding-left: 25px; color: #777; font-size: 20px; }
.keyboard__mic { margin-left: auto; padding: 8px 14px 0; }
.keys { padding: 14px 5px 2px; }
.keys__row { display: flex; height: 52px; }
.keys__row--inset { padding: 0 17px; }
.keys button { position: relative; display: flex; flex: 0 0 35px; align-items: center; justify-content: center; font-size: 22px; }
.keys sup { position: absolute; top: 4px; left: 25px; color: #999; font-size: 10px; line-height: 12px; }
.keys .key--wide { flex-basis: 52px; }
.keys .key--small { color: #888; font-size: 12px; }
.keys .key--space { flex-basis: 150px; height: 24px; margin: 13px 12px 0 13px; border-radius: 2px; background: #d9d9d9; }

/* Dialogs */
.scrim {
  position: absolute;
  inset: 0;
  display: flex;
  align-items: center;
  justify-content: center;
  background: rgba(0, 0, 0, .22);
}
.dialog {
  width: 280px;
  border-radius: 2px;
  background: #fafafa;
  box-shadow: 0 4px 14px rgba(0, 0, 0, .45);
}
.dialog h2 { height: 60px; padding: 4px 24px 0; font-size: 20px; line-height: 56px; }
.dialog__body { height: 244px; overflow: hidden; border-bottom: 1px solid #ddd; }
.dialog footer { display: flex; justify-content: flex-end; gap: 8px; height: 48px; padding-right: 12px; }
.dialog footer button { width: 72px; color: #555; }
.dialog footer .is-primary { color: #40c4ff; }

.wheels { display: flex; gap: 32px; padding: 17px 37px 0; color: #bdbdbd; text-align: center; }
.wheels ul { width: 48px; }
.wheels li { height: 36px; line-height: 36px; }
.wheels .is-picked { height: 35px; margin-bottom: 13px; padding-top: 6px; border-bottom: 1px solid #bdbdbd; color: #666; line-height: 32px; }
.wheels .is-focused .is-picked { border-bottom: 2px solid #40c4ff; }

.options { position: relative; }
.options label { display: flex; align-items: center; gap: 27px; height: 48px; padding-left: 27px; color: #777; }
.options input { appearance: none; width: 18px; height: 18px; border: 2px solid #757575; border-radius: 2px; }
.options input:checked { display: grid; place-items: center; border: 0; background: #40c4ff; }
.options input:checked::before {
  content: "";
  width: 12px;
  height: 6px;
  margin-top: -4px;
  border: solid #fff;
  border-width: 0 0 2px 2px;
  transform: rotate(-45deg);
}
.options::before { content: ""; position: absolute; right: 0; bottom: 0; left: 0; height: 28px; background: linear-gradient(rgba(255, 255, 255, .3), #fff 50%); }
.options::after { content: ""; position: absolute; top: 5px; right: 2px; width: 3px; height: 72px; border-radius: 1px; background: #999; }

/* Measurement layer */
.redlines { position: absolute; top: 0; left: 0; width: 100%; height: 100%; overflow: visible; pointer-events: none; }
.dim { fill: none; stroke: #f00; stroke-width: 1; shape-rendering: crispEdges; }
.dim--green { stroke: #0f0; }
.dim--dashed { stroke-dasharray: 6 4; }
.num { fill: #f00; font: 14px "DejaVu Sans Condensed", "Noto Sans", sans-serif; }
.num--green { fill: #0f0; }
.num text { text-anchor: middle; paint-order: stroke; stroke: #fff; stroke-width: 3px; }
.num .start { text-anchor: start; }
.lead { fill: none; stroke: #00f; stroke-width: 1; marker-end: url(#tip-blue); }
.lead--red { stroke: #f00; marker-end: url(#tip-red); }
.note { fill: #00f; font: 14px "Liberation Serif", "Noto Sans CJK SC", serif; paint-order: stroke; stroke: #fff; stroke-width: 2px; }
.note--red { fill: #f00; }
.end { text-anchor: end; }
```
